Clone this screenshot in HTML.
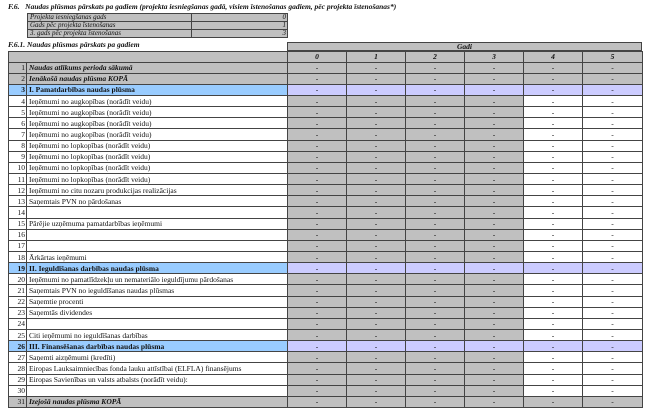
<!DOCTYPE html>
<html><head><meta charset="utf-8"><style>
body{margin:0;width:645px;height:415px;background:#fff;font-family:"Liberation Serif",serif;font-size:7.5px;color:#111;position:relative;overflow:hidden}
.t{position:absolute;white-space:nowrap}
table{border-collapse:collapse;table-layout:fixed;position:absolute}
td{border:1px solid #444;padding:0 2px;height:10.15px;line-height:9px;white-space:nowrap;overflow:hidden}
table.s td{height:7px;line-height:7px;font-size:7px}
.n{text-align:right;padding-right:1px}
.g{background:#c0c0c0}
.b{background:#99ccff;font-weight:bold}
.bi{font-weight:bold;font-style:italic}
.c{text-align:center}
tr.y td:nth-child(n+3){text-align:center;background:#c0c0c0}
tr.y td:nth-child(n+7){background:#fff}
tr.gr td{background:#c0c0c0}
tr.bl td:nth-child(n+3){background:#ccccff;text-align:center}
tr.gr td:nth-child(n+3){text-align:center}
</style></head><body>
<div class="t bi" style="left:8px;top:2px">F.6.&nbsp;&nbsp;&nbsp;Naudas plūsmas pārskats pa gadiem (projekta iesniegšanas gadā, visiem īstenošanas gadiem, pēc projekta īstenošanas*)</div>
<table class="s" style="left:27px;top:13px;width:260px">
<col style="width:164px"><col style="width:96px">
<tr class="gr"><td style="font-style:italic">Projekta iesniegšanas gads</td><td class="n" style="font-style:italic">0</td></tr>
<tr class="gr"><td style="font-style:italic">Gads pēc projekta īstenošanas</td><td class="n" style="font-style:italic">1</td></tr>
<tr class="gr"><td style="font-style:italic">3. gads pēc projekta īstenošanas</td><td class="n" style="font-style:italic">3</td></tr>
</table>
<div class="t bi" style="left:8px;top:40px">F.6.1. Naudas plūsmas pārskats pa gadiem</div>
<table style="left:287px;top:42px;width:355px"><tr><td class="g c bi" style="height:7px;line-height:7px">Gadi</td></tr></table>
<table style="left:8px;top:50.5px;width:634px">
<col style="width:18px"><col style="width:261px"><col style="width:59px"><col style="width:59px"><col style="width:59px"><col style="width:59px"><col style="width:59px"><col style="width:60px">
<tr class="gr"><td style="border-right:none"></td><td style="border-left:none"></td><td class="bi">0</td><td class="bi">1</td><td class="bi">2</td><td class="bi">3</td><td class="bi">4</td><td class="bi">5</td></tr>
<tr class="gr"><td class="n">1</td><td class="bi">Naudas atlikums perioda sākumā</td><td>-</td><td>-</td><td>-</td><td>-</td><td>-</td><td>-</td></tr>
<tr class="gr"><td class="n">2</td><td class="bi">Ienākošā naudas plūsma KOPĀ</td><td>-</td><td>-</td><td>-</td><td>-</td><td>-</td><td>-</td></tr>
<tr class="bl"><td class="n b">3</td><td class="b">I. Pamatdarbības naudas plūsma</td><td>-</td><td>-</td><td>-</td><td>-</td><td>-</td><td>-</td></tr>
<tr class="y"><td class="n">4</td><td>Ieņēmumi no augkopības (norādīt veidu)</td><td>-</td><td>-</td><td>-</td><td>-</td><td>-</td><td>-</td></tr>
<tr class="y"><td class="n">5</td><td>Ieņēmumi no augkopības (norādīt veidu)</td><td>-</td><td>-</td><td>-</td><td>-</td><td>-</td><td>-</td></tr>
<tr class="y"><td class="n">6</td><td>Ieņēmumi no augkopības (norādīt veidu)</td><td>-</td><td>-</td><td>-</td><td>-</td><td>-</td><td>-</td></tr>
<tr class="y"><td class="n">7</td><td>Ieņēmumi no augkopības (norādīt veidu)</td><td>-</td><td>-</td><td>-</td><td>-</td><td>-</td><td>-</td></tr>
<tr class="y"><td class="n">8</td><td>Ieņēmumi no lopkopības (norādīt veidu)</td><td>-</td><td>-</td><td>-</td><td>-</td><td>-</td><td>-</td></tr>
<tr class="y"><td class="n">9</td><td>Ieņēmumi no lopkopības (norādīt veidu)</td><td>-</td><td>-</td><td>-</td><td>-</td><td>-</td><td>-</td></tr>
<tr class="y"><td class="n">10</td><td>Ieņēmumi no lopkopības (norādīt veidu)</td><td>-</td><td>-</td><td>-</td><td>-</td><td>-</td><td>-</td></tr>
<tr class="y"><td class="n">11</td><td>Ieņēmumi no lopkopības (norādīt veidu)</td><td>-</td><td>-</td><td>-</td><td>-</td><td>-</td><td>-</td></tr>
<tr class="y"><td class="n">12</td><td>Ieņēmumi no citu nozaru produkcijas realizācijas</td><td>-</td><td>-</td><td>-</td><td>-</td><td>-</td><td>-</td></tr>
<tr class="y"><td class="n">13</td><td>Saņemtais PVN no pārdošanas</td><td>-</td><td>-</td><td>-</td><td>-</td><td>-</td><td>-</td></tr>
<tr class="y"><td class="n">14</td><td></td><td>-</td><td>-</td><td>-</td><td>-</td><td>-</td><td>-</td></tr>
<tr class="y"><td class="n">15</td><td>Pārējie uzņēmuma pamatdarbības ieņēmumi</td><td>-</td><td>-</td><td>-</td><td>-</td><td>-</td><td>-</td></tr>
<tr class="y"><td class="n">16</td><td></td><td>-</td><td>-</td><td>-</td><td>-</td><td>-</td><td>-</td></tr>
<tr class="y"><td class="n">17</td><td></td><td>-</td><td>-</td><td>-</td><td>-</td><td>-</td><td>-</td></tr>
<tr class="y"><td class="n">18</td><td>Ārkārtas ieņēmumi</td><td>-</td><td>-</td><td>-</td><td>-</td><td>-</td><td>-</td></tr>
<tr class="bl"><td class="n b">19</td><td class="b">II. Ieguldīšanas darbības naudas plūsma</td><td>-</td><td>-</td><td>-</td><td>-</td><td>-</td><td>-</td></tr>
<tr class="y"><td class="n">20</td><td>Ieņēmumi no pamatlīdzekļu un nemateriālo ieguldījumu pārdošanas</td><td>-</td><td>-</td><td>-</td><td>-</td><td>-</td><td>-</td></tr>
<tr class="y"><td class="n">21</td><td>Saņemtais PVN no ieguldīšanas naudas plūsmas</td><td>-</td><td>-</td><td>-</td><td>-</td><td>-</td><td>-</td></tr>
<tr class="y"><td class="n">22</td><td>Saņemtie procenti</td><td>-</td><td>-</td><td>-</td><td>-</td><td>-</td><td>-</td></tr>
<tr class="y"><td class="n">23</td><td>Saņemtās dividendes</td><td>-</td><td>-</td><td>-</td><td>-</td><td>-</td><td>-</td></tr>
<tr class="y"><td class="n">24</td><td></td><td>-</td><td>-</td><td>-</td><td>-</td><td>-</td><td>-</td></tr>
<tr class="y"><td class="n">25</td><td>Citi ieņēmumi no ieguldīšanas darbības</td><td>-</td><td>-</td><td>-</td><td>-</td><td>-</td><td>-</td></tr>
<tr class="bl"><td class="n b">26</td><td class="b">III. Finansēšanas darbības naudas plūsma</td><td>-</td><td>-</td><td>-</td><td>-</td><td>-</td><td>-</td></tr>
<tr class="y"><td class="n">27</td><td>Saņemti aizņēmumi (kredīti)</td><td>-</td><td>-</td><td>-</td><td>-</td><td>-</td><td>-</td></tr>
<tr class="y"><td class="n">28</td><td>Eiropas Lauksaimniecības fonda lauku attīstībai (ELFLA) finansējums</td><td>-</td><td>-</td><td>-</td><td>-</td><td>-</td><td>-</td></tr>
<tr class="y"><td class="n">29</td><td>Eiropas Savienības un valsts atbalsts (norādīt veidu):</td><td>-</td><td>-</td><td>-</td><td>-</td><td>-</td><td>-</td></tr>
<tr class="y"><td class="n">30</td><td></td><td>-</td><td>-</td><td>-</td><td>-</td><td>-</td><td>-</td></tr>
<tr class="gr"><td class="n">31</td><td class="bi">Izejošā naudas plūsma KOPĀ</td><td>-</td><td>-</td><td>-</td><td>-</td><td>-</td><td>-</td></tr>
</table>
</body></html>
